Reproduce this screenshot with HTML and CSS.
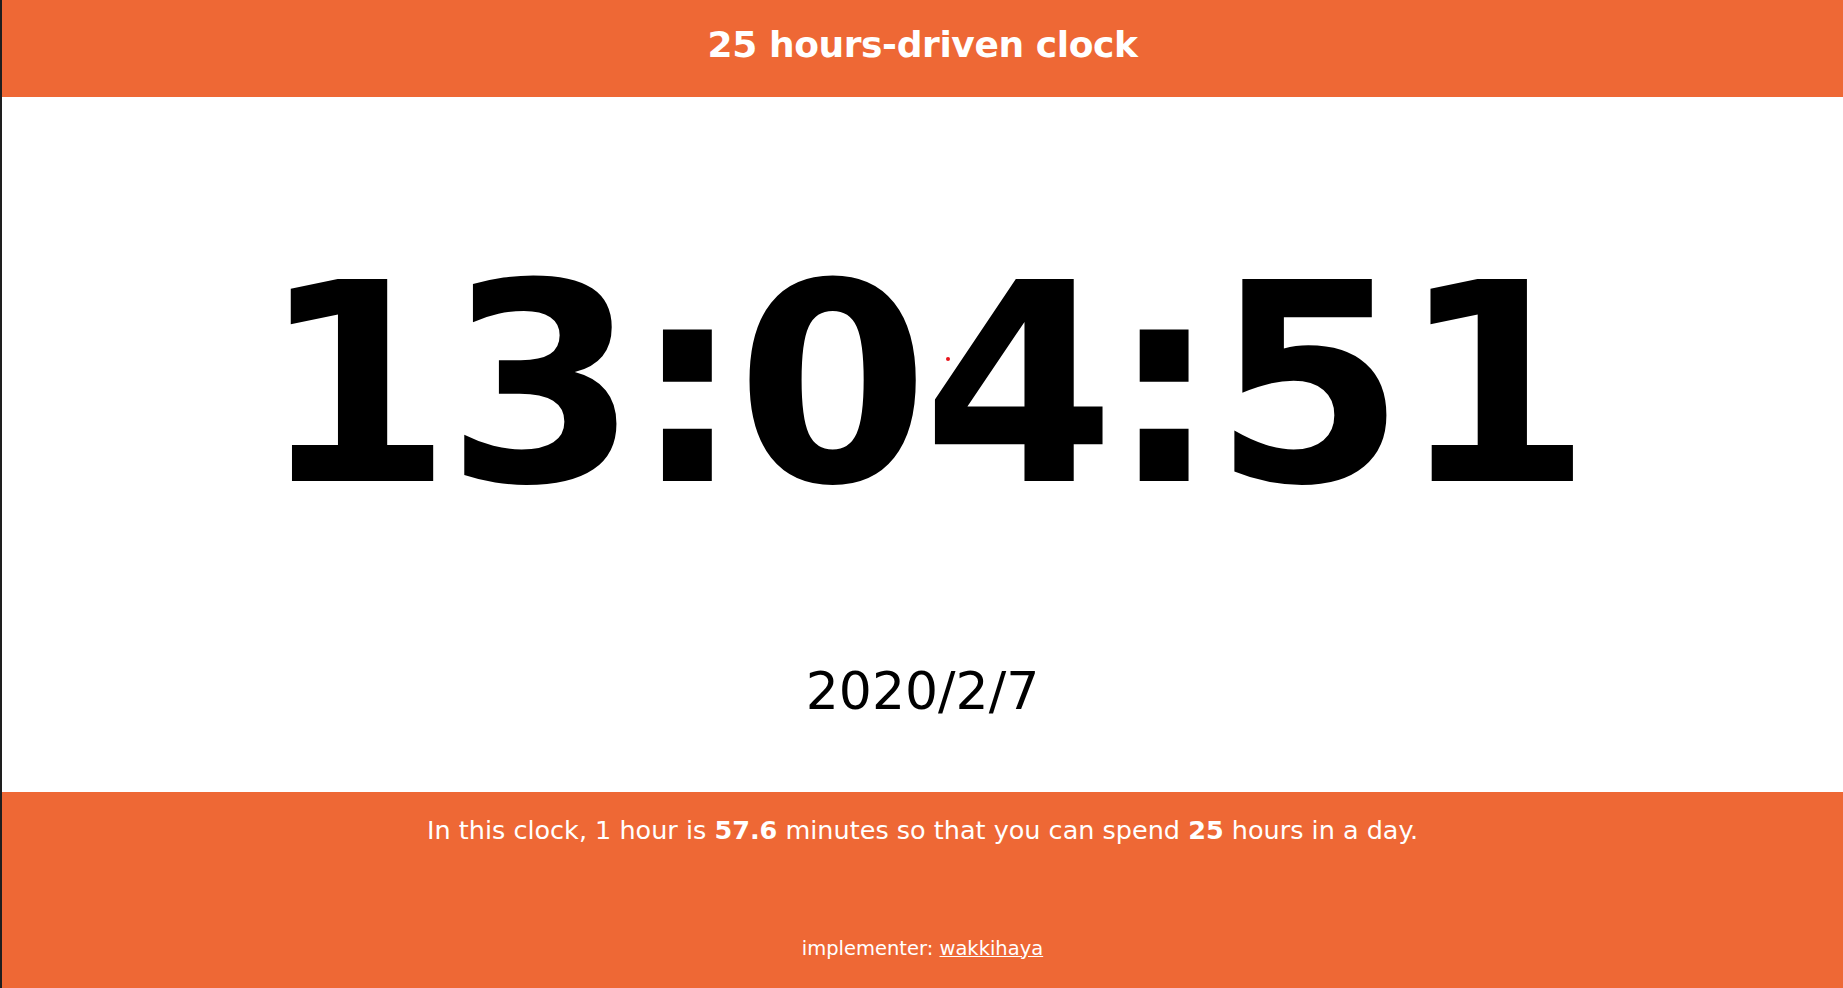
FILE: index.html
```html
<!DOCTYPE html>
<html lang="en">
<head>
<meta charset="utf-8">
<title>25 hours-driven clock</title>
<link rel="stylesheet" href="styles.css">
</head>
<body>
<div class="page">
  <header class="header">
    <h1 class="title">25 hours-driven clock</h1>
  </header>
  <main class="main">
    <div class="clock">13:04:51</div>
    <div class="date">2020/2/7</div>
    <span class="cursor-dot"></span>
  </main>
  <footer class="footer">
    <p class="desc">In this clock, 1 hour is <b>57.6</b> minutes so that you can spend <b>25</b> hours in a day.</p>
    <p class="credit">implementer: <a href="#" class="credit-link">wakkihaya</a></p>
  </footer>
</div>
</body>
</html>
```

FILE: styles.css
```css
html, body {
  margin: 0;
  padding: 0;
  background: #ffffff;
}

.page {
  display: flex;
  flex-direction: column;
  height: 988px;
  border-left: 2px solid #1e1e1e;
  font-family: "DejaVu Sans", Verdana, sans-serif;
  color: #000;
}

.header {
  height: 97px;
  background: #ee6835;
  display: flex;
  align-items: center;
  justify-content: center;
}

.title {
  margin: 0;
  font-size: 36px;
  font-weight: bold;
  letter-spacing: -0.4px;
  color: #ffffff;
  line-height: 1;
  padding-bottom: 7px;
}

.main {
  flex: 1;
  position: relative;
  display: flex;
  flex-direction: column;
  align-items: center;
  padding-top: 150px;
}

.clock {
  font-size: 277px;
  font-weight: bold;
  line-height: 1;
  letter-spacing: -6.5px;
}

.date {
  margin-top: 141px;
  font-size: 52px;
  line-height: 1;
}

.cursor-dot {
  position: absolute;
  left: 944px;
  top: 260px;
  width: 4px;
  height: 4px;
  border-radius: 50%;
  background: #e8141b;
}

.footer {
  height: 196px;
  background: #ee6835;
  color: #ffffff;
  display: flex;
  flex-direction: column;
  align-items: center;
  padding-top: 24px;
  box-sizing: border-box;
}

.desc {
  margin: 0;
  font-size: 25.5px;
  line-height: 1.164;
}

.credit {
  margin: 92px 0 0;
  font-size: 19.5px;
  line-height: 1.164;
}

.credit-link {
  color: #ffffff;
  text-decoration: underline;
}
```
